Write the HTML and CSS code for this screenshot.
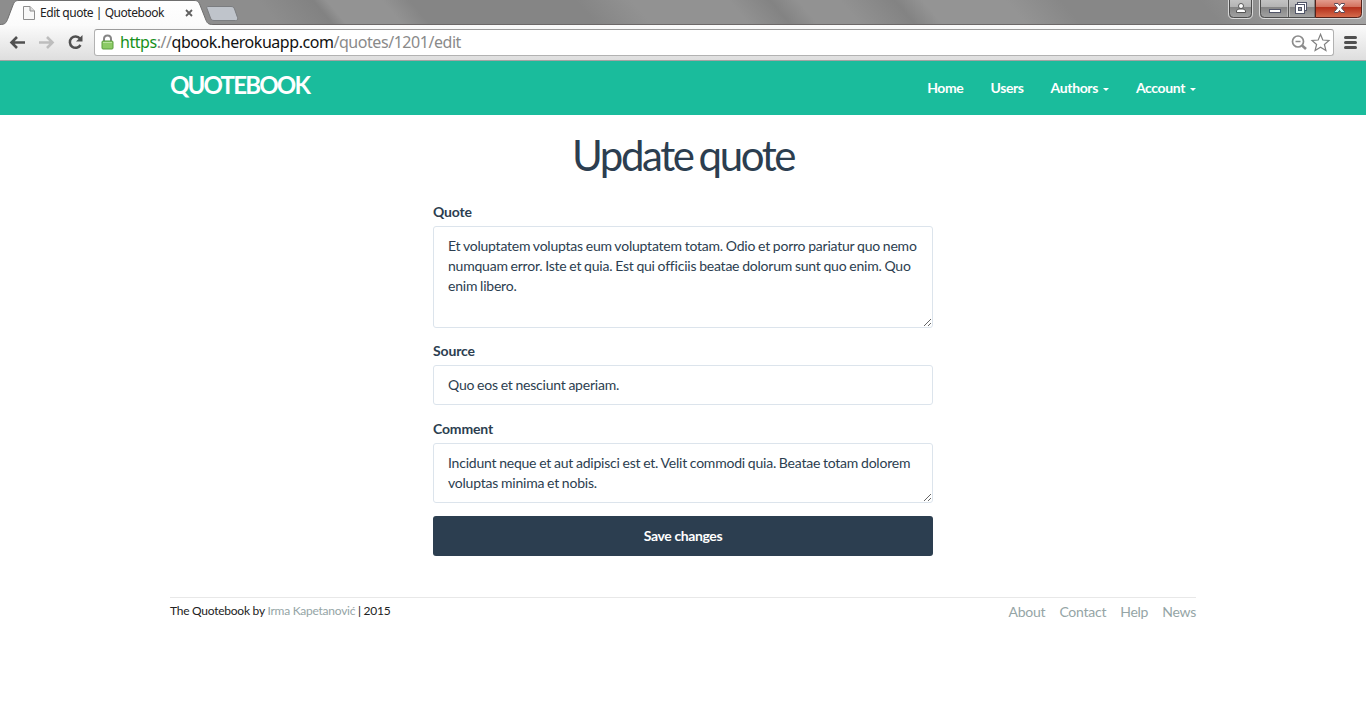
FILE: index.html
```html
<!DOCTYPE html>
<html lang="en">
<head>
<meta charset="utf-8">
<title>Edit quote | Quotebook</title>
<link rel="stylesheet" href="styles.css">
</head>
<body>
<div class="browser">
  <div class="titlebar">
    <div class="tab">
      <svg class="tab-shape" width="250" height="26" viewBox="0 0 250 26">
        <defs>
          <linearGradient id="tabfill" x1="0" y1="0" x2="0" y2="1"><stop offset="0" stop-color="#fff"/><stop offset="1" stop-color="#fbfbfb"/></linearGradient>
        </defs>
        <path d="M0 24.5C5 24.5 6 23 7.500 19.500L13 5C14.500 1.500 15.500 0.500 19 0.500H194C197.500 0.500 198.500 1.500 200 5L205.500 19C207 23 208 24.500 213 24.500V26H0Z" fill="url(#tabfill)"/>
        <path d="M0 24.500C5 24.500 6 23 7.500 19.500L13 5C14.500 1.500 15.500 0.500 19 0.500H194C197.500 0.500 198.500 1.500 200 5L205.500 19C207 23 208 24.500 213 24.500" fill="none" stroke="#6f6f6f"/>
        <path d="M208 6.500H231C233 6.500 234 7.500 234.500 9L237.500 17.500C238 19.500 237.500 20.500 235.500 20.500H214C212 20.500 211 19.500 210.500 18L207 8.500C206.500 7 207 6.500 208 6.500Z" fill="#bfc4cb" stroke="#7b7d80"/>
      </svg>
      <div class="tab-content">
        <svg width="12" height="14" viewBox="0 0 12 14"><path d="M.5.5H7L11.500 5V13.500H.5Z" fill="#f8f8f8" stroke="#8e8e8e"/><path d="M7 .5V5H11.500" fill="#ddd" stroke="#8e8e8e"/></svg>
        <span class="tab-title">Edit quote | Quotebook</span>
        <svg width="8" height="8" viewBox="0 0 8 8"><path d="M1 1L7 7M7 1L1 7" stroke="#606060" stroke-width="1.8"/></svg>
      </div>
    </div>
    <svg class="controls" width="137" height="20" viewBox="0 0 137 20">
      <defs>
        <linearGradient id="glass" x1="0" y1="0" x2="0" y2="1"><stop offset="0" stop-color="#c5c5c5"/><stop offset=".44" stop-color="#b3b3b3"/><stop offset=".46" stop-color="#858585"/><stop offset="1" stop-color="#a3a3a3"/></linearGradient>
        <linearGradient id="close" x1="0" y1="0" x2="0" y2="1"><stop offset="0" stop-color="#e5a294"/><stop offset=".44" stop-color="#d2705c"/><stop offset=".46" stop-color="#b5301b"/><stop offset="1" stop-color="#d66d4e"/></linearGradient>
      </defs>
      <path d="M.5 -1V14Q.5 18.500 5 18.500H20Q24.500 18.500 24.500 14V-1M31.500 -1V14Q31.500 18.500 36 18.500H130Q134.500 18.500 134.500 14V-1" fill="none" stroke="#d8d8d8"/>
      <path d="M1.500 -1V13.500Q1.500 17.500 5.500 17.500H19.500Q23.500 17.500 23.500 13.500V-1Z" fill="url(#glass)" stroke="#4d4d4d"/>
      <path d="M32.500 -1V13.500Q32.500 17.500 36.500 17.500H87V-1Z" fill="url(#glass)" stroke="#4d4d4d"/>
      <path d="M87.500 -1V17.500H129.500Q133.500 17.500 133.500 13.500V-1Z" fill="url(#close)" stroke="#54231c"/>
      <path d="M60.500 0V17" stroke="#555"/><path d="M61.500 0V17M59.500 0V17" stroke="#c9c9c9" opacity=".7"/>
      <circle cx="13" cy="6" r="2.500" fill="#fff" stroke="#555"/><path d="M8.500 12.500V11Q9 9 11 9H15Q17 9 17.500 11V12.500Z" fill="#fff" stroke="#555"/>
      <rect x="41.500" y="9.500" width="11" height="3" fill="#fff" stroke="#515568"/>
      <rect x="69.500" y="2.500" width="9" height="8" fill="#fff" stroke="#515568"/><rect x="67.500" y="4.500" width="9" height="9" fill="#fff" stroke="#515568"/><rect x="70.500" y="7.500" width="3" height="3" fill="#999" stroke="#515568"/>
      <path d="M106.500 3.500H110L111.500 5.500L113 3.500H116.500V4.500L113.500 8L116.500 11.500V12.500H113L111.500 10.500L110 12.500H106.500V11.500L109.500 8L106.500 4.500Z" fill="#fff" stroke="#5b4b58"/>
    </svg>
  </div>
  <div class="toolbar">
    <svg class="nav-icons" width="94" height="34" viewBox="0 0 94 34">
      <path d="M11 16.500H25M17 11L11.500 16.500L17 22" fill="none" stroke="#505050" stroke-width="2.600"/>
      <path d="M39 16.500H53M47 11L52.500 16.500L47 22" fill="none" stroke="#bdbdbd" stroke-width="2.600"/>
      <path d="M80 12.500A5.700 5.700 0 1 0 80.500 19" fill="none" stroke="#505050" stroke-width="2.500"/>
      <path d="M82.500 9V15.500H76Z" fill="#505050"/>
    </svg>
    <div class="omnibox">
      <svg width="13" height="16" viewBox="0 0 13 16"><path d="M3 8V5Q3 1.500 6.500 1.500Q10 1.500 10 5V8" fill="none" stroke="#858585" stroke-width="2"/><rect x="1" y="7" width="11" height="8" rx="1" fill="#8ccb66" stroke="#5a9e3c"/><path d="M2 8.500H11" stroke="#b9e39f"/></svg>
      <div class="url"><span class="scheme">https</span><span class="dim">://</span>qbook.herokuapp.com<span class="dim">/quotes/1201/edit</span></div>
      <svg width="42" height="20" viewBox="0 0 42 20"><circle cx="7" cy="9.500" r="5.500" fill="none" stroke="#8c8c8c" stroke-width="1.700"/><path d="M4.500 9.500H9.500" stroke="#8c8c8c" stroke-width="1.500"/><path d="M11 13.500L15 17" stroke="#8c8c8c" stroke-width="2.600"/><path d="M29.500 2.300L31.800 8L38 8.500L33.400 12.500L34.900 18.500L29.500 15.200L24.100 18.500L25.600 12.500L21 8.500L27.200 8Z" fill="#fff" stroke="#808080" stroke-width="1.200"/></svg>
    </div>
    <svg width="32" height="34" viewBox="0 0 32 34"><path d="M11.500 11.500H21.500M11.500 16.500H21.500M11.500 21.500H21.500" stroke="#505050" stroke-width="3" stroke-linecap="round"/></svg>
  </div>
</div>
<header class="navbar">
  <div class="container nav-row">
    <a class="brand">QUOTEBOOK</a>
    <nav class="menu">
      <a>Home</a><a>Users</a><a>Authors<i class="caret"></i></a><a>Account<i class="caret"></i></a>
    </nav>
  </div>
</header>
<main class="form">
  <h1>Update quote</h1>
  <label for="quote">Quote</label>
  <textarea class="field quote" id="quote">Et voluptatem voluptas eum voluptatem totam. Odio et porro pariatur quo nemo numquam error. Iste et quia. Est qui officiis beatae dolorum sunt quo enim. Quo enim libero.</textarea>
  <label for="source">Source</label>
  <input class="field source" id="source" value="Quo eos et nesciunt aperiam.">
  <label for="comment">Comment</label>
  <textarea class="field comment" id="comment">Incidunt neque et aut adipisci est et. Velit commodi quia. Beatae totam dolorem voluptas minima et nobis.</textarea>
  <button class="save">Save changes</button>
</main>
<footer class="container footer">
  <small>The Quotebook by <a>Irma Kapetanović</a> | 2015</small>
  <nav class="links"><a>About</a><a>Contact</a><a>Help</a><a>News</a></nav>
</footer>
</body>
</html>
```

FILE: styles.css
```css
* { box-sizing: border-box; }
html, body { height: 100%; overflow: hidden; }
body { margin: 0; background: #fff; color: #2c3e50; font: 14px/20px Lato, sans-serif; }
svg { display: block; flex: none; }

.browser { height: 61px; font-family: "Noto Sans", sans-serif; }
.titlebar {
  height: 25px; display: flex; justify-content: space-between; border-bottom: 1px solid #6c6868;
  background: linear-gradient(50deg, #8d8d8d 0 20%, #828282 24%, #939393 25% 29%, #858585 31% 43%, #929292 47% 54%, #838383 57%, #929292 59% 62%, #838383 66%, #949494 68% 74%, #878787 78% 88%, #989898 94%, #a5a5a5);
}
.tab { position: relative; width: 250px; height: 26px; }
.tab-shape { position: absolute; left: 0; top: 0; }
.tab-content { position: relative; display: flex; align-items: center; height: 26px; padding-left: 23px; }
.tab-title { width: 145px; margin-left: 5px; font-size: 12px; letter-spacing: -.46px; color: #222; white-space: nowrap; }
.controls { margin-right: 1px; }
.toolbar { height: 36px; display: flex; align-items: center; background: linear-gradient(#fbfbfb, #dedede); border-bottom: 1px solid #a3a3a3; }
.omnibox { flex: 1; height: 27px; margin-top: -1px; display: flex; align-items: center; padding: 0 0 0 6px; background: #fff; border: 1px solid #b2b2b2; border-top-color: #9b9b9b; border-radius: 3px; }
.url { flex: 1; margin-left: 6px; font-size: 16px; letter-spacing: -.45px; color: #111; white-space: nowrap; }
.scheme { color: #17901b; }
.dim { color: #8a8a8a; }

.navbar { height: 54px; background: #1abc9c; color: #fff; }
.container { width: 1026px; margin: 0 auto; }
.nav-row { display: flex; justify-content: space-between; }
.brand { font-size: 24px; font-weight: 700; letter-spacing: -1.8px; padding-top: 14px; }
.menu { display: flex; gap: 27px; padding-top: 17px; font-weight: 700; letter-spacing: -.38px; }
.caret { display: inline-block; margin-left: 5px; vertical-align: middle; border: 3px solid transparent; border-top-color: #fff; border-bottom: 0; }

.form { width: 500px; margin: 0 auto; padding-top: 17px; display: flex; flex-direction: column; }
h1 { margin: 0 0 30px; font-size: 42px; font-weight: 400; line-height: 46px; letter-spacing: -2.4px; word-spacing: -2.4px; text-align: center; }
label { font-weight: 700; letter-spacing: -.15px; margin-top: -6px; margin-bottom: 4px; }
.field { display: block; width: 500px; margin: 0 0 20px; padding: 9px 14px; border: 1px solid #dce4ec; border-radius: 3px; background: #fff; color: #2c3e50; font: inherit; letter-spacing: -.22px; word-spacing: -.5px; overflow: hidden; }
.quote { height: 102px; margin-bottom: 19px; }
.source { height: 40px; padding-top: 8px; padding-bottom: 10px; }
.comment { height: 60px; margin-bottom: 13px; }
.save { height: 40px; padding: 0; border: 0; border-radius: 3px; background: #2c3e50; color: #fff; font: 700 14px/20px Lato, sans-serif; letter-spacing: -.4px; }

.footer { margin-top: 41px; border-top: 1px solid #e8e8e8; display: flex; justify-content: space-between; }
.footer small { padding-top: 3px; font-size: 12px; letter-spacing: -.25px; color: #222; }
.footer a { color: #95a5a6; }
.links { display: flex; gap: 14px; padding-top: 4px; letter-spacing: -.25px; }
```
